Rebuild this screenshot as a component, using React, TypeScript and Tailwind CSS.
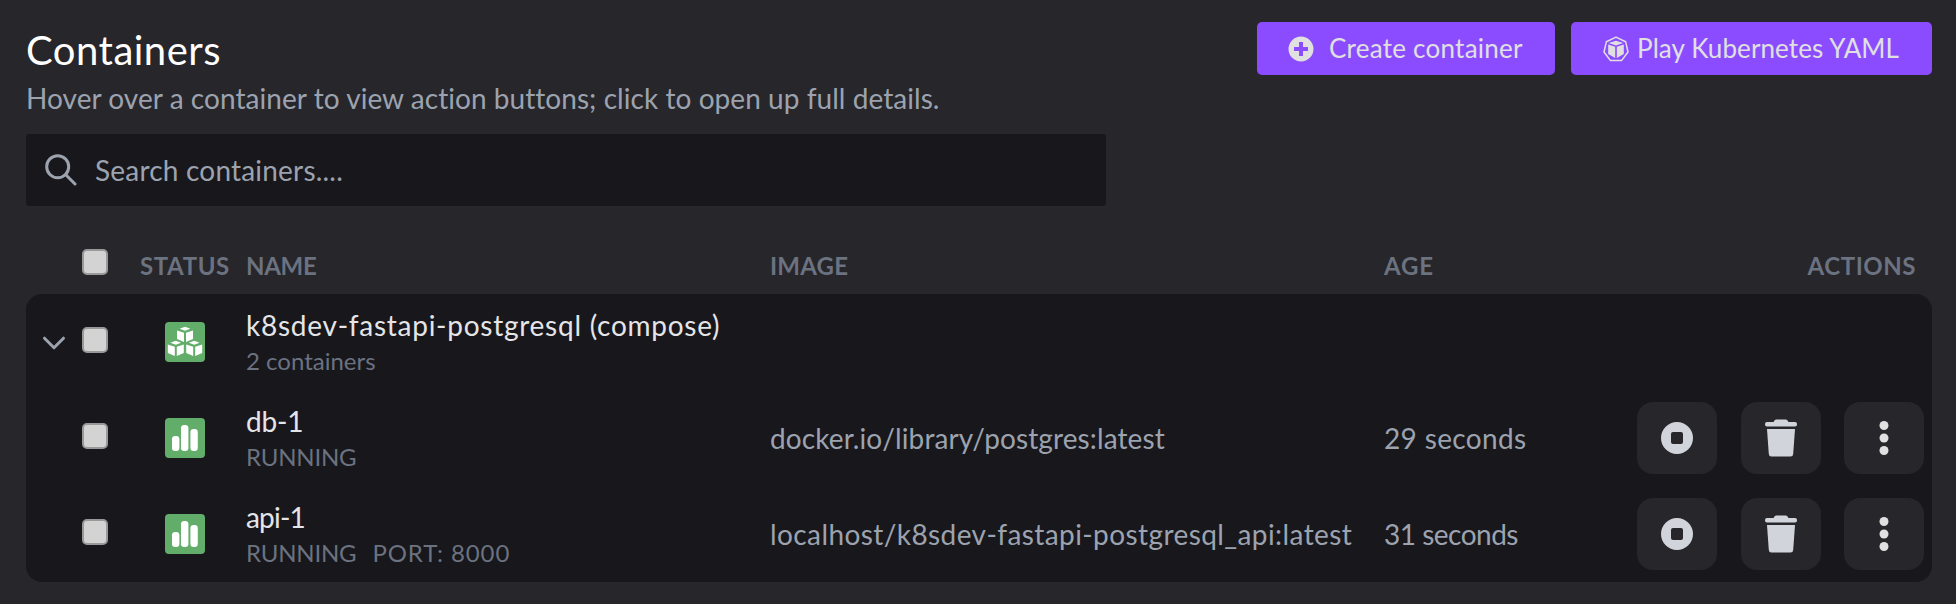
import type { ReactNode } from "react";

function PlusCircle() {
  return (
    <svg viewBox="0 0 26 26" className="h-[26px] w-[26px]">
      <path fillRule="evenodd" fill="#e0e0e0" d="M13 .5a12.5 12.5 0 1 1 0 25a12.5 12.5 0 0 1 0-25zM11 6v5H6v4h5v5h4v-5h5v-4h-5V6z" />
    </svg>
  );
}

function CubeBadge() {
  return (
    <svg viewBox="0 0 26 26" className="h-[26px] w-[26px]">
      <path d="M13 1.1L22.6 5.7L25 16L18.5 24.6H7.5L1 16L3.4 5.7z" fill="none" stroke="#e0e0e0" strokeWidth="1.5" strokeLinejoin="round" />
      <g fill="#e0e0e0">
        <path d="M13 4.7L20.3 7.1L13 9.6L5.7 7.1z" />
        <path d="M5.2 8.4L12.2 10.8V22L5.2 18z" />
        <path d="M20.8 8.4L13.8 10.8V22L20.8 18z" />
      </g>
    </svg>
  );
}

function SearchIcon() {
  return (
    <svg viewBox="0 0 32 32" className="h-8 w-8" fill="none" stroke="#9ca3af" strokeWidth="3" strokeLinecap="round">
      <circle cx="12.7" cy="12.7" r="11" />
      <path d="M20.8 20.8L30 30" />
    </svg>
  );
}

function Cube({ x, y }: { x: number; y: number }) {
  return (
    <g transform={`translate(${x} ${y})`} fill="#fff">
      <path d="M0 0.2L5.4 2.1L0 4.1L-5.4 2.1z" />
      <path d="M-8 3.8L-1 6.2V15.3L-8 12.4z" />
      <path d="M8 3.8L1 6.2V15.3L8 12.4z" />
    </g>
  );
}

function PodIcon() {
  return (
    <svg viewBox="0 0 40 40" className="h-10 w-10">
      <Cube x={20} y={4.6} />
      <Cube x={10.8} y={18.6} />
      <Cube x={29.2} y={18.6} />
    </svg>
  );
}

function BarsIcon() {
  return (
    <svg viewBox="0 0 40 40" className="h-10 w-10" fill="#fff">
      <rect x="7" y="18" width="7.4" height="15" rx="3.2" />
      <rect x="16" y="7" width="7.4" height="26" rx="3.2" />
      <rect x="25.4" y="11" width="7.4" height="22" rx="3.2" />
    </svg>
  );
}

function StopIcon() {
  return (
    <svg viewBox="0 0 32 32" className="h-8 w-8">
      <path fillRule="evenodd" fill="#d1d5db" d="M16 0a16 16 0 1 1 0 32a16 16 0 0 1 0-32zM12 10a2 2 0 0 0-2 2v8a2 2 0 0 0 2 2h8a2 2 0 0 0 2-2v-8a2 2 0 0 0-2-2z" />
    </svg>
  );
}

function TrashIcon() {
  return (
    <svg viewBox="0 0 32 38" className="h-[38px] w-8" fill="#d1d5db">
      <path d="M2 3H8.6Q9.4 .5 11 .5H21Q22.6 .5 23.4 3H30Q32 3 32 5V5.4Q32 7.4 30 7.4H2Q0 7.4 0 5.4V5Q0 3 2 3z" />
      <path d="M2 10H30L28.2 35Q28 37.6 25.6 37.6H6.4Q4 37.6 3.8 35z" />
    </svg>
  );
}

function DotsIcon() {
  return (
    <svg viewBox="0 0 10 36" className="h-9 w-[10px]" fill="#e0e0e0">
      <circle cx="5" cy="5.5" r="4.5" />
      <circle cx="5" cy="18" r="4.5" />
      <circle cx="5" cy="30.5" r="4.5" />
    </svg>
  );
}

function Checkbox() {
  return <span className="mb-1 block h-[26px] w-[26px] shrink-0 rounded-[5px] border-2 border-[#999] bg-[#d3d3d3]" />;
}

function ActionButton({ children }: { children: ReactNode }) {
  return <button className="flex h-[72px] w-20 items-center justify-center rounded-2xl bg-[#27262b]">{children}</button>;
}

const COLS = "grid grid-cols-[56px_52px_112px_524px_614px_1fr]";

type RowProps = {
  chevron?: boolean;
  icon: ReactNode;
  name: ReactNode;
  sub: ReactNode;
  image?: ReactNode;
  age?: ReactNode;
};

function Row({ chevron, icon, name, sub, image, age }: RowProps) {
  return (
    <div className={`${COLS} h-24 items-center`}>
      <div className="flex pl-4 pt-0.5">
        {chevron && (
          <svg viewBox="0 0 24 16" className="h-4 w-6" fill="none" stroke="#9ca3af" strokeWidth="3" strokeLinecap="round" strokeLinejoin="round">
            <path d="M2.5 3.2L12 12.8L21.5 3.2" />
          </svg>
        )}
      </div>
      <Checkbox />
      <div className="flex pl-[31px]">
        <div className="h-10 w-10 overflow-hidden rounded-[4px] bg-[#62ad6a]">{icon}</div>
      </div>
      <div className="whitespace-nowrap pt-0.5">
        <div className="text-[28px] leading-[35px] text-[#e5e5e8]">{name}</div>
        <div className="flex gap-4 text-[24px] leading-[35px] text-[#6b7280]">{sub}</div>
      </div>
      <div className="whitespace-nowrap text-[28px] leading-9 text-[#9ca3af]">{image}</div>
      <div className="flex items-center justify-between pr-2 text-[28px] leading-9 text-[#9ca3af]">
        {age}
        {image && (
          <div className="flex gap-[23.5px]">
            <ActionButton><StopIcon /></ActionButton>
            <ActionButton><TrashIcon /></ActionButton>
            <ActionButton><DotsIcon /></ActionButton>
          </div>
        )}
      </div>
    </div>
  );
}

export default function App() {
  return (
    <div className="h-[604px] w-[1956px] overflow-hidden bg-[#27262b] pl-[26px] pr-6 pt-[22px] font-['Lato',sans-serif] text-white">
      <div className="flex h-28 justify-between">
        <div className="pt-1">
          <h1 className="text-[40px] leading-[48px] tracking-[0.5px]">Containers</h1>
          <p className="text-[28px] leading-[48px] tracking-[0.05px] text-[#9ca3af]">
            Hover over a container to view action buttons; click to open up full details.
          </p>
        </div>
        <div className="flex h-[53px] gap-4 text-[26px] text-[#e0e0e0]">
          <button className="flex w-[298px] items-center gap-[15px] rounded-[5px] bg-[#8b4cff] pl-[31px]">
            <PlusCircle />
            <span className="tracking-[0.25px]">Create container</span>
          </button>
          <button className="flex w-[361px] items-center gap-2 rounded-[5px] bg-[#8b4cff] pl-8">
            <CubeBadge />
            <span className="tracking-[0.1px]">Play Kubernetes YAML</span>
          </button>
        </div>
      </div>

      <div className="flex h-[72px] w-[1080px] items-center gap-[18px] rounded-[3px] bg-[#18171c] pl-[19px] text-[28px] text-[#9ca3af]">
        <SearchIcon />
        <span className="tracking-[0.2px]">Search containers....</span>
      </div>

      <div className={`${COLS} mt-[32px] h-14 items-center text-[24px] font-bold leading-8 text-[#6b7280]`}>
        <div />
        <div className="pb-1">
          <Checkbox />
        </div>
        <div className="pl-[6px] tracking-[0.6px]">STATUS</div>
        <div className="tracking-[-0.3px]">NAME</div>
        <div className="tracking-[0.2px]">IMAGE</div>
        <div className="flex justify-between pr-4">
          <span className="tracking-[0.8px]">AGE</span>
          <span className="tracking-[0.55px]">ACTIONS</span>
        </div>
      </div>

      <div className="h-72 rounded-2xl bg-[#18171c]">
        <Row
          chevron
          icon={<PodIcon />}
          name={<span className="tracking-[0.74px]">k8sdev-fastapi-postgresql (compose)</span>}
          sub={<span>2 containers</span>}
        />
        <Row
          icon={<BarsIcon />}
          name={<span className="tracking-[-0.2px]">db-1</span>}
          sub={<span className="tracking-[-0.2px]">RUNNING</span>}
          image={<span className="tracking-[0.1px]">docker.io/library/postgres:latest</span>}
          age={<span className="tracking-[0.35px]">29 seconds</span>}
        />
        <Row
          icon={<BarsIcon />}
          name={<span className="tracking-[-0.8px]">api-1</span>}
          sub={<><span className="tracking-[-0.2px]">RUNNING</span><span className="tracking-[0.9px]">PORT: 8000</span></>}
          image={<span className="tracking-[0.41px]">localhost/k8sdev-fastapi-postgresql_api:latest</span>}
          age={<span className="tracking-[-0.5px]">31 seconds</span>}
        />
      </div>
    </div>
  );
}
